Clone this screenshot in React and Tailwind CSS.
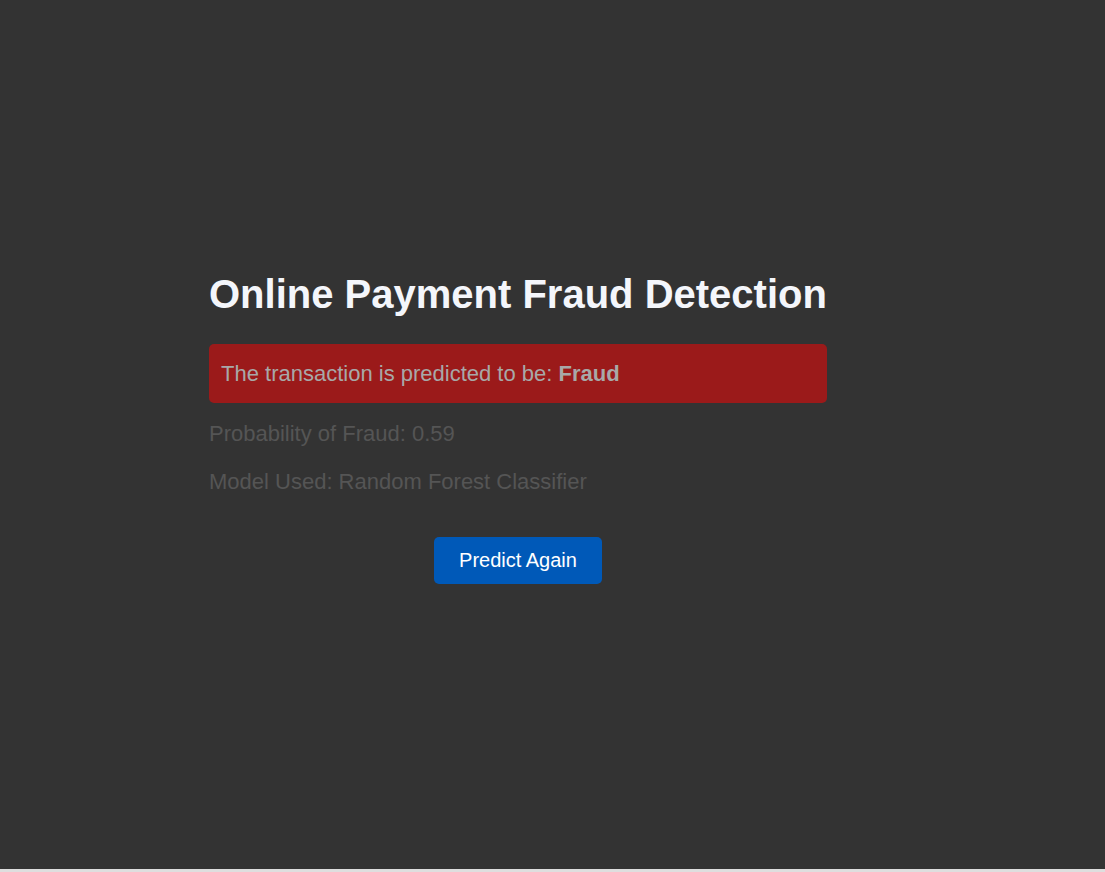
import React from "react";

export default function App() {
  return (
    <div className="w-[1105px] h-[872px] bg-[#dedede] font-['Liberation_Sans',Arial,sans-serif]">
      <div className="h-[869px] bg-[#333333] pt-[271px]">
        {/* Result card */}
        <div className="ml-[209px] w-[618px] flex flex-col">
          <h1 className="text-[40px] leading-[46px] font-bold text-[#f4f6fb] m-0">
            Online Payment Fraud Detection
          </h1>

          <div className="mt-[27px] bg-[#9b1a1a] rounded-[5px] px-3 py-[17px] text-[22px] leading-[25px] text-[#a8a8a8]">
            The transaction is predicted to be: <strong className="font-bold">Fraud</strong>
          </div>

          <p className="mt-[18px] text-[22px] leading-[25px] text-[#555555]">Probability of Fraud: 0.59</p>
          <p className="mt-[23px] text-[22px] leading-[25px] text-[#555555]">Model Used: Random Forest Classifier</p>

          <div className="mt-[43px] flex justify-center">
            <button className="w-[168px] h-[47px] bg-[#0059b8] rounded-[5px] text-white text-[20px] leading-[23px]">
              Predict Again
            </button>
          </div>
        </div>
      </div>
    </div>
  );
}
